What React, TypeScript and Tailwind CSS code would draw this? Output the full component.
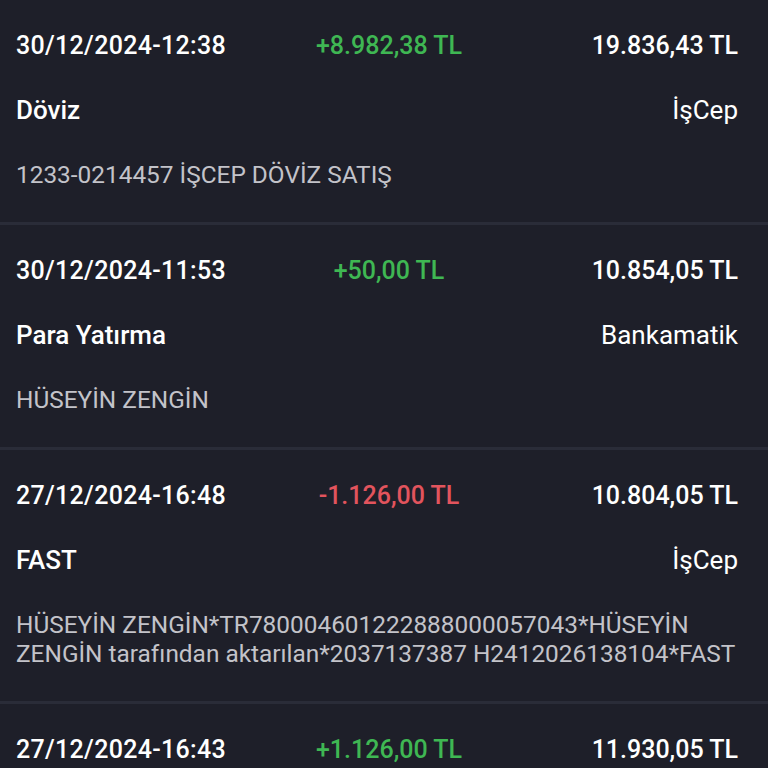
const items = [
  {
    date: "30/12/2024-12:38",
    amount: "+8.982,38 TL",
    balance: "19.836,43 TL",
    type: "Döviz",
    channel: "İşCep",
    desc: "1233-0214457 İŞCEP DÖVİZ SATIŞ",
  },
  {
    date: "30/12/2024-11:53",
    amount: "+50,00 TL",
    balance: "10.854,05 TL",
    type: "Para Yatırma",
    channel: "Bankamatik",
    desc: "HÜSEYİN ZENGİN",
  },
  {
    date: "27/12/2024-16:48",
    amount: "-1.126,00 TL",
    balance: "10.804,05 TL",
    type: "FAST",
    channel: "İşCep",
    desc: "HÜSEYİN ZENGİN*TR780004601222888000057043*HÜSEYİN ZENGİN tarafından aktarılan*2037137387 H2412026138104*FAST",
  },
  {
    date: "27/12/2024-16:43",
    amount: "+1.126,00 TL",
    balance: "11.930,05 TL",
    type: "FAST",
    channel: "İşCep",
    desc: "HÜSEYİN ZENGİN",
  },
];

const Row = (props: any) => {
  const neg = props.amount.startsWith("-");
  return (
    <div className="px-4 pr-[30px] pt-[27px] pb-[33px] border-b-[3px] border-[#2a2c38]">
      <div className="grid grid-cols-[290px_166px_1fr] items-center h-9 text-[25px] font-medium text-white">
        <div className="tracking-[0.3px]">{props.date}</div>
        <div className={"text-center " + (neg ? "text-[#e2545d]" : "text-[#3fb753]")}>{props.amount}</div>
        <div className="text-right">{props.balance}</div>
      </div>
      <div className="flex justify-between items-center h-9 mt-[29px] text-[26px] text-white">
        <div className="font-medium">{props.type}</div>
        <div>{props.channel}</div>
      </div>
      <div className="mt-[32px] text-[24.4px] leading-[29px] text-[#c3c3c9]">{props.desc}</div>
    </div>
  );
};

export default function App() {
  return (
    <div className="w-[768px] h-[768px] overflow-hidden bg-[#1e1f29] font-['Roboto',sans-serif]">
      {items.map((x, i) => (
        <Row key={i} {...x} />
      ))}
    </div>
  );
}
